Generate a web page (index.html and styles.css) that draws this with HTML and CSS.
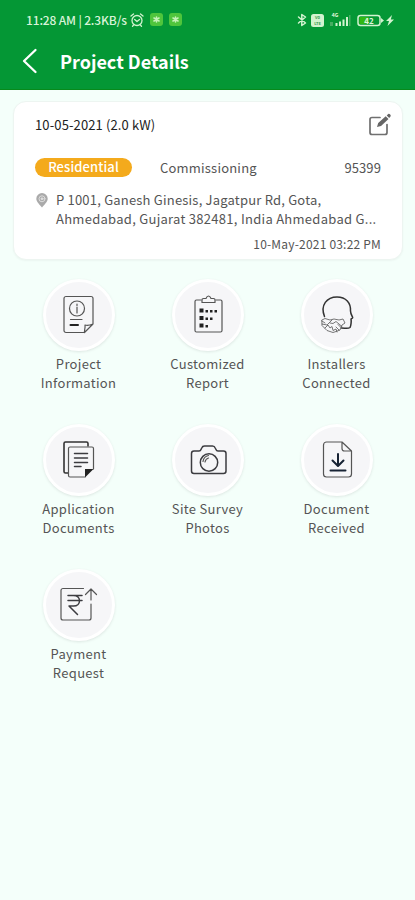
FILE: index.html
```
<!DOCTYPE html>
<html lang="en">
<head>
	<meta charset="UTF-8">
	<meta name="viewport" content="width=device-width, initial-scale=1">
	<title>Project Details</title>
	<link rel="stylesheet" href="styles.css">
</head>
<body>
	<header class="header">
		<div class="status">
			<span class="status-text">11:28 AM | 2.3KB/s</span>
			<svg class="alarm" width="14" height="14" viewBox="0 0 14 14"><circle cx="7" cy="7.5" r="5"/><path d="M1 3l2.5-2M13 3l-2.5-2M4.7 6.5L7 8.5l2.5-2M3.5 12l-1 1.3M10.5 12l1 1.3"/></svg>
			<svg class="app" width="13" height="13" viewBox="0 0 13 13"><rect width="13" height="13" rx="3"/><path d="M6.500 4v5M4 5l5 3M9 5L4 8"/></svg>
			<svg class="app" width="13" height="13" viewBox="0 0 13 13"><rect width="13" height="13" rx="3"/><path d="M6.500 4v5M4 5l5 3M9 5L4 8"/></svg>
			<svg class="status-right" width="98" height="16" viewBox="0 0 98 16">
				<path class="line" d="M1.500 5l7 6-3.700 2.500v-11L8.500 5l-7 6"/>
				<rect class="fill" x="14" y="2" width="13" height="13" rx="2.500"/>
				<text class="volte" x="20.500" y="7.300">Vo</text>
				<text class="volte" x="20.500" y="13.300">LTE</text>
				<text class="net" x="38" y="5">4G</text>
				<path class="fill" d="M38.500 11h2v3h-2zM42 9.500h2V14h-2zM45.500 7.500h2V14h-2zM49 5h2v9h-2z"/>
				<path class="dim" d="M33 10h3v4h-3zM52 3h1.500v11H52z"/>
				<rect class="line" x="61" y="3.500" width="22" height="10" rx="2.500"/>
				<rect class="charge" x="62.500" y="5" width="9" height="7"/>
				<path class="fill" d="M84 6l3 2.500-3 2.500z"/>
				<text class="level" x="72" y="11.500">42</text>
				<path class="fill" d="M95 3l-6 6h3l-1.500 5L97 7.500h-3.200z"/>
			</svg>
		</div>
		<div class="title-bar">
			<svg width="16" height="26" viewBox="0 0 16 26"><path d="M13.500 2L2 13l11.500 11"/></svg>
			<h1>Project Details</h1>
		</div>
	</header>

	<section class="card">
		<div class="row top">
			<span class="name">10-05-2021 (2.0 kW)</span>
			<svg class="edit" width="24" height="24" viewBox="0 0 24 24">
				<path d="M12 4.500H4A2 2 0 0 0 2 6.500v13a2 2 0 0 0 2 2h13a2 2 0 0 0 2-2v-8"/>
				<path class="pen" d="M9 14l1.200-4 7.500-6.800 2.800 2.800-7.500 7zM18.700 2.500L20.200 1q1-.5 2 .5t.3 2L21.200 5z"/>
			</svg>
		</div>
		<div class="row info">
			<span class="badge">Residential</span>
			<span class="stage">Commissioning</span>
			<span class="number">95399</span>
		</div>
		<div class="address">
			<svg width="12" height="15" viewBox="0 0 12 15"><path d="M6 14.500C4 12 .3 9 .3 5.800a5.700 5.700 0 0 1 11.400 0C11.700 9 8 12 6 14.500z"/><circle cx="6" cy="5.800" r="3"/><circle class="dot" cx="6" cy="5.800" r="1"/></svg>
			<p>P 1001, Ganesh Ginesis, Jagatpur Rd, Gota,<br><span class="second">Ahmedabad, Gujarat 382481, India Ahmedabad G...</span></p>
		</div>
		<div class="date">10-May-2021 03:22 PM</div>
	</section>

	<ul class="menu">
		<li>
			<div class="circle">
				<svg width="40" height="40" viewBox="0 0 40 40">
					<path d="M25 37.500H7a2 2 0 0 1-2-2V3.500a2 2 0 0 1 2-2h25a2 2 0 0 1 2 2V29l-8.500 8.500c-.5-1 1-4.500.5-7.500 2.500.7 5 .2 8-1"/>
					<circle cx="18" cy="13.500" r="7.500"/>
					<path d="M18 12v6M18 9v1.500M11.500 24.500h11.500"/>
					<path class="bold" d="M11.500 30H19"/>
				</svg>
			</div>
			<p>Project<br>Information</p>
		</li>
		<li>
			<div class="circle">
				<svg width="40" height="40" viewBox="0 0 40 40">
					<path d="M13 5H8.500a1.500 1.500 0 0 0-1.500 1.500V35.500a1.500 1.500 0 0 0 1.500 1.500h24A1.500 1.500 0 0 0 34 35.500V6.500A1.500 1.500 0 0 0 32.500 5H28"/>
					<path d="M14 7.500V4.500q0-1 1.500-1h2.500q1-2.500 2.500-2.500T23 3.500h2.500q1.500 0 1.500 1v3z"/>
					<path class="solid" d="M11.500 13.500h4v4h-4zM11.500 21h4v4h-4zM11.500 28.500h4v4h-4zM17.500 15h2.500v2.500h-2.500zM22 15h2.500v2.500H22zM26.500 15H29v2.500h-2.500zM17.500 22.500h2.500V25h-2.500zM22 22.500h2.500V25H22zM17.500 30h2.500v2.500h-2.500z"/>
				</svg>
			</div>
			<p>Customized<br>Report</p>
		</li>
		<li>
			<div class="circle">
				<svg width="40" height="40" viewBox="0 0 40 40">
					<path class="head" d="M7.500 21.500C3 10 10 2 20 2c9 0 14 6 13.500 14 0 2.500 1.500 5 2.200 6.500 0 1-1.200 1-1.700 1.500.5 2 0 7-1 8.500-2 1.500-5 .5-8.500.5"/>
					<path class="thin" d="M5 25l3-1.500 5 1.500 4-1 5 1 4-1 2 4-3 2-2 5-4 1.500-3 1-6-2-5-5v-2zM5 29l5 1 5-5M13 28l3 .5 3-2 6 5M8 33l3-3 2 3 2-1.500 1 4 3-1.500 1 3M19 32l3 3M21 29.500l3 3M5 26l3 2"/>
				</svg>
			</div>
			<p>Installers<br>Connected</p>
		</li>
		<li>
			<div class="circle">
				<svg width="40" height="40" viewBox="0 0 40 40">
					<path class="heavy" d="M9 33H6.500A1.500 1.500 0 0 1 5 31.500V3.500A1.500 1.500 0 0 1 6.500 2h21A1.500 1.500 0 0 1 29 3.500V6"/>
					<path d="M26 37H11a1.500 1.500 0 0 1-1.500-1.500v-27A1.500 1.500 0 0 1 11 7h22a1.500 1.500 0 0 1 1.500 1.500V29"/>
					<path class="mid" d="M15.500 13.500h13M15.500 18h13M15.500 22.500h13M15.500 26.500H22"/>
					<path class="solid" d="M26 37.500V29h8.500z"/>
				</svg>
			</div>
			<p>Application<br>Documents</p>
		</li>
		<li>
			<div class="circle">
				<svg width="40" height="40" viewBox="0 0 40 40">
					<path class="mid" d="M6 11h5q1.500 0 2-1.500l.7-1.500Q14.500 6 16.500 6h8q2 0 2.700 2l.8 1.500q.5 1.500 2 1.500h5.500Q38 11 38 13.500V31q0 2.500-2.500 2.500H6Q3.500 33.500 3.500 31V13.500Q3.500 11 6 11z"/>
					<circle class="mid" cx="21" cy="22.500" r="8.700"/>
					<path d="M15 21.500q.7-5 5.500-6M17 22q.5-3 3.500-4"/>
				</svg>
			</div>
			<p>Site Survey<br>Photos</p>
		</li>
		<li>
			<div class="circle">
				<svg width="40" height="40" viewBox="0 0 40 40">
					<path d="M25 2H9.500a3 3 0 0 0-3 3v29a3 3 0 0 0 3 3h22a3 3 0 0 0 3-3V11zM25 2v6.500a2.500 2.500 0 0 0 2.500 2.500h7"/>
					<path class="arrow" d="M21 14v11M15.500 20.500L21 26l5.500-5.500M13.500 30.500h15"/>
				</svg>
			</div>
			<p>Document<br>Received</p>
		</li>
		<li>
			<div class="circle">
				<svg width="40" height="40" viewBox="0 0 40 40">
					<path d="M24.500 3.500H4a2 2 0 0 0-2 2V33a2 2 0 0 0 2 2h26a2 2 0 0 0 2-2V19"/>
					<path d="M32 15V4M26.500 9.500L32 4l5.500 5.500"/>
					<path class="mid" d="M9 10.500h14M9 15.500h14M12 10.500h2.500c8 0 8 10.500 0 10.500H10l8.500 8.500"/>
				</svg>
			</div>
			<p>Payment<br>Request</p>
		</li>
	</ul>
</body>
</html>
```
FILE: styles.css
```
*{
	box-sizing: border-box;
}
body,h1,p,ul{
	margin: 0;
	padding: 0;
}
body{
	min-height: 900px;
	background: #f4fffa;
	color: #555;
	font-family: "Noto Sans CJK SC", "Noto Sans", sans-serif;
	font-size: 13px;
}
svg{
	display: block;
	flex: none;
	fill: none;
	stroke-linecap: round;
	stroke-linejoin: round;
}
.header{
	height: 90px;
	background: #049735;
	border-bottom: 1px solid #078a1b;
	color: #fff;
}
.status{
	display: flex;
	align-items: center;
	height: 39px;
	padding: 0 20px 0 26px;
}
.status-text{
	width: 101px;
	font-size: 12px;
	font-weight: 500;
	white-space: nowrap;
	letter-spacing: -.15px;
	color: #d8f3d8;
}
.alarm{
	margin-left: 3px;
	stroke: #d3f3cf;
	stroke-width: 1.3;
}
.app{
	margin-left: 6px;
	fill: #4fc53c;
	stroke: #c5f2b8;
	stroke-width: 1.6;
}
.app rect{
	stroke: none;
}
.status-right{
	margin-left: auto;
}
.status-right .line{
	stroke: #d3f3cf;
	stroke-width: 1.5;
}
.status-right .fill{
	fill: #d3f3cf;
}
.status-right .dim{
	fill: #46ad62;
}
.status-right .charge{
	fill: #30b814;
}
.status-right text{
	font-size: 8px;
	font-weight: bold;
	text-anchor: middle;
	fill: #e0f6dc;
}
.status-right .volte{
	font-size: 4px;
	fill: #35994d;
}
.status-right .net{
	font-size: 5px;
}
.title-bar{
	display: flex;
	align-items: center;
	height: 43px;
	padding-left: 22px;
}
.title-bar svg{
	stroke: #fff;
	stroke-width: 2.3;
}
.title-bar h1{
	margin-left: 22px;
	font-size: 18px;
	line-height: 28px;
	font-weight: 700;
}
.card{
	height: 159px;
	margin: 12px 12px 0 13px;
	margin-top: 11px;
	padding: 11px 21px 0 22px;
	border: 1px solid #edf5f1;
	border-radius: 13px;
	background: #fff;
	box-shadow: 0 1px 2px rgba(0,0,0,.04);
}
.row{
	display: flex;
	align-items: center;
}
.top{
	height: 24px;
	justify-content: space-between;
}
.name{
	margin-left: -1px;
	padding-bottom: 2px;
	color: #222;
	letter-spacing: .12px;
}
.edit{
	margin-right: -11px;
	stroke: #707070;
	stroke-width: 1.7;
}
.edit .pen{
	fill: #666;
	stroke: none;
}
.info{
	height: 20px;
	margin: 20px 0 0 -1px;
}
.badge{
	width: 97px;
	height: 19px;
	border-radius: 10px;
	background: #f4aa1c;
	color: #fff;
	font-weight: 500;
	line-height: 18px;
	text-align: center;
	letter-spacing: .1px;
}
.stage{
	margin-left: 28px;
	letter-spacing: .2px;
}
.number{
	margin-left: auto;
	letter-spacing: .1px;
}
.address{
	display: flex;
	margin-top: 13px;
	line-height: 19px;
	white-space: nowrap;
	letter-spacing: .2px;
}
.address svg{
	margin-top: 3px;
	fill: #aaa;
}
.address circle{
	stroke: #ddd;
}
.address .dot{
	fill: #eee;
}
.address p{
	margin-left: 8px;
}
.second{
	letter-spacing: .28px;
}
.date{
	margin-top: 7px;
	font-size: 12px;
	line-height: 18px;
	text-align: right;
	letter-spacing: .2px;
}
.menu{
	display: grid;
	grid-template-columns: repeat(3, 129px);
	grid-auto-rows: 145px;
	padding: 19px 0 0 14px;
	list-style: none;
}
.menu li{
	display: flex;
	flex-direction: column;
	align-items: center;
}
.circle{
	display: flex;
	align-items: center;
	justify-content: center;
	width: 72px;
	height: 72px;
	border: 3px solid #fff;
	border-radius: 50%;
	background: #f6f6f8;
	box-shadow: 0 1px 3px rgba(0,0,0,.1);
}
.circle svg{
	stroke: #555;
	stroke-width: 1.2;
}
.circle .thin{
	stroke-width: .8;
}
.circle .mid{
	stroke: #3c3c40;
	stroke-width: 1.5;
}
.circle .head{
	stroke: #333;
	stroke-width: 1.5;
}
.circle .heavy{
	stroke: #333;
	stroke-width: 1.6;
}
.circle .bold{
	stroke: #222;
	stroke-width: 2;
}
.circle .arrow{
	stroke: #172334;
	stroke-width: 2;
}
.circle .solid{
	fill: #222;
	stroke: none;
}
.menu p{
	margin-top: 3px;
	line-height: 19px;
	text-align: center;
	letter-spacing: .3px;
}
```
